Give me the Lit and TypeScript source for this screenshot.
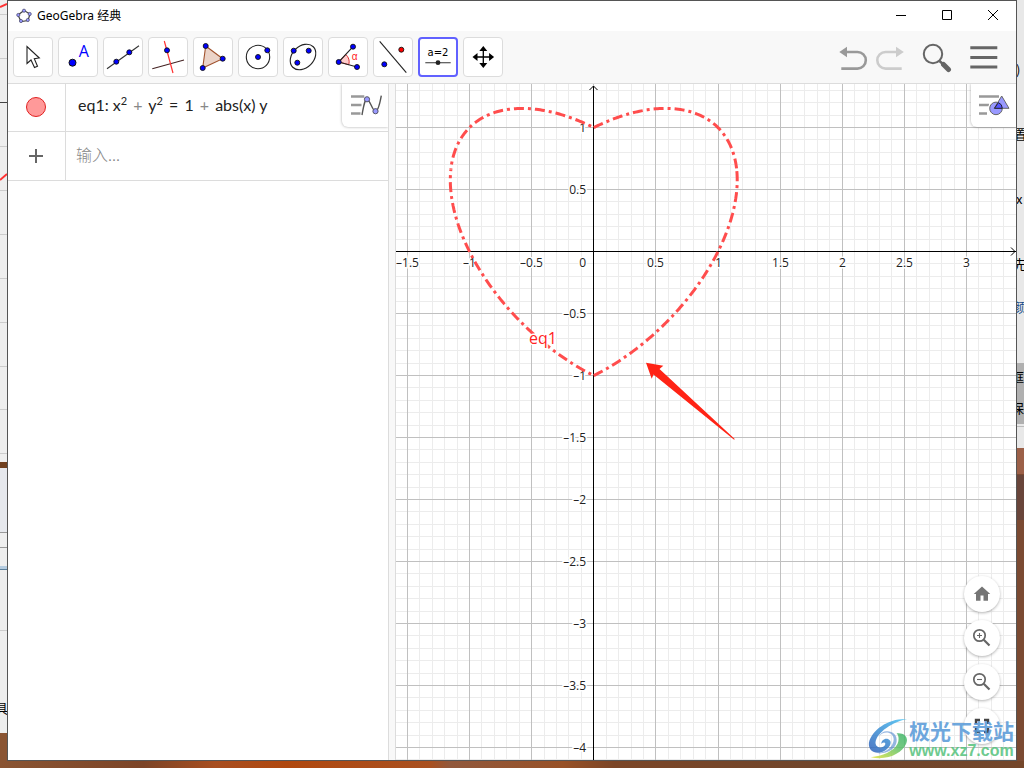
import { LitElement, html, svg, css, TemplateResult } from "lit";
import { customElement, state } from "lit/decorators.js";

/* ---------- tool icons ---------- */
const dot = (x: number, y: number, fill = "#00f") =>
  svg`<circle cx=${x} cy=${y} r="2.5" fill=${fill} stroke="#111" stroke-width="0.9"/>`;

interface Tool { name: string; icon: TemplateResult }

const tools: Tool[] = [
  { name: "Move", icon: svg`<path d="M14 9.5V26.5L18 23L21.5 30.5L24.5 29.2L21.3 21.8L26.3 21Z" fill="#fff" stroke="#222" stroke-width="1.1"/>` },
  { name: "Point", icon: svg`<circle cx="14.5" cy="25.7" r="3.5" fill="#00f" stroke="#111"/><text x="25.7" y="20" text-anchor="middle" font-size="16" fill="#00f">A</text>` },
  { name: "Line", icon: svg`<path d="M4 31.7L36 8.7" stroke="#333" stroke-width="1.1"/>${dot(13.3, 24.7)}${dot(26.3, 15.3)}` },
  { name: "Perpendicular Line", icon: svg`<path d="M4.3 31.7L36 23" stroke="#422" stroke-width="1.1"/><path d="M16.3 4L25 36" stroke="#f33" stroke-width="1.2"/>${dot(19, 13.3)}` },
  { name: "Polygon", icon: svg`<path d="M12.7 9L29.7 21.7L9.7 31Z" fill="#ebd3c8" stroke="#a0522d" stroke-width="1.1"/>${dot(12.7, 9)}${dot(29.7, 21.7)}${dot(9.7, 31)}` },
  { name: "Circle with Center", icon: svg`<circle cx="20" cy="20" r="11.7" fill="none" stroke="#222" stroke-width="1.1"/>${dot(20, 20)}${dot(29.3, 13.3)}` },
  { name: "Ellipse", icon: svg`<ellipse cx="20" cy="20" rx="14.5" ry="10.8" transform="rotate(-45 20 20)" fill="none" stroke="#222" stroke-width="1.1"/>${dot(10.7, 13.7)}${dot(25.7, 13.7)}${dot(14.3, 25.7)}` },
  { name: "Angle", icon: svg`<path d="M10.7 25L17.7 17.4A10.4 10.4 0 0 1 20.8 27.7Z" fill="#fcc" stroke="#d33" stroke-width="1"/><path d="M25 9.7L10.7 25L29 30" fill="none" stroke="#222" stroke-width="1.1"/>${dot(10.7, 25)}${dot(25, 9.7)}${dot(29, 30)}<text x="26.7" y="23" text-anchor="middle" font-family="Liberation Sans, sans-serif" font-size="10" fill="#f22">α</text>` },
  { name: "Reflect about Line", icon: svg`<path d="M6.7 4.3L33.3 35.7" stroke="#222" stroke-width="1.1"/>${dot(28.3, 12.7, "#f00")}${dot(11.3, 27.3)}` },
  { name: "Slider", icon: svg`<text x="20" y="18.6" text-anchor="middle" font-family="DejaVu Sans, sans-serif" font-size="10" fill="#000">a=2</text><path d="M7.3 25.7H32.7" stroke="#555" stroke-width="1.2"/><circle cx="20" cy="25.7" r="2.4" fill="#222"/>` },
  { name: "Move Graphics View", icon: svg`<path d="M20.3 12V28M12 20H28.6" stroke="#000" stroke-width="1.3"/><path d="M20.3 9L24.3 14H16.3ZM20.3 31L24.3 26H16.3ZM9.5 20L14.5 16V24ZM31.1 20L26.1 16V24Z" fill="#000"/>` },
];

/* ---------- graph geometry ---------- */
const ORIGIN_X = 197.76;
const ORIGIN_Y = 167.4;
const UNIT_X = 124.25;
const UNIT_Y = 124;
const snap = (v: number) => Math.floor(v) + 0.5;
const toX = (x: number) => snap(ORIGIN_X + UNIT_X * x);
const toY = (y: number) => snap(ORIGIN_Y - UNIT_Y * y);
const range = (from: number, to: number) => Array.from({ length: to - from + 1 }, (_, i) => from + i);
const label = (n: number) => String(n).replace("-", "–");

/* One arc of x² + y² = 1 + |x| y, sampled by angle; side mirrors it to the left half. */
function arc(fromDeg: number, toDeg: number, side: number): string {
  const steps = 90;
  return range(0, steps).map((i) => {
    const t = ((fromDeg + ((toDeg - fromDeg) * i) / steps) * Math.PI) / 180;
    const r = 1 / Math.sqrt(1 - Math.abs(Math.cos(t)) * Math.sin(t));
    const x = ORIGIN_X + UNIT_X * r * Math.cos(t) * side;
    const y = ORIGIN_Y + 0.2 - UNIT_Y * r * Math.sin(t);
    return `${i ? "L" : "M"}${x.toFixed(2)} ${y.toFixed(2)}`;
  }).join("");
}

@customElement("graph-view")
export class GraphView extends LitElement {
  static styles = css`
    :host { display: block; position: relative; min-width: 0; background: #fff; overflow: hidden; }
    .plot { display: block; width: 100%; height: 100%; font-family: "Open Sans", "Noto Sans", sans-serif; }
    .minor { stroke: #ececec; }
    .major { stroke: #c0c0c0; }
    .axis { stroke: #000; fill: none; }
    .tick { font-size: 12px; fill: #222; stroke: #fff; stroke-width: 3px; paint-order: stroke; }
    .curve { fill: none; stroke: #ff4d4d; stroke-width: 3px; stroke-dasharray: 10 4 3 4; }
    .shifted { stroke-dashoffset: 11px; }
    .name { font-size: 16px; fill: #f22; stroke: #fff; stroke-width: 3px; paint-order: stroke; }
    .style-button {
      position: absolute; top: 0; right: 0; width: 45px; height: 43px; padding: 0; border: 0;
      border-radius: 0 0 0 6px; background: #fff; box-shadow: 0 0 3px rgba(0, 0, 0, 0.35);
    }
    .style-button svg { display: block; }
    .zoom { position: absolute; right: 16px; bottom: 16px; display: flex; flex-direction: column; gap: 8px; }
    .zoom button {
      display: grid; place-items: center; width: 36px; height: 36px; padding: 0; border: 0;
      border-radius: 50%; background: #fff; box-shadow: 0 1px 3px rgba(0, 0, 0, 0.3);
    }
  `;

  @state() private viewWidth = 620;
  @state() private viewHeight = 676;

  private observer = new ResizeObserver(([entry]) => {
    this.viewWidth = entry.contentRect.width;
    this.viewHeight = entry.contentRect.height;
  });

  connectedCallback() {
    super.connectedCallback();
    this.observer.observe(this);
  }

  disconnectedCallback() {
    this.observer.disconnect();
    super.disconnectedCallback();
  }

  render() {
    const xs = range(-15, Math.floor(((this.viewWidth - ORIGIN_X) / UNIT_X) * 10));
    const ys = range(-Math.floor(((this.viewHeight - ORIGIN_Y) / UNIT_Y) * 10), 13);
    const major = (n: number) => n % 5 === 0;
    const v = (n: number) => svg`<line class=${major(n) ? "major" : "minor"} x1=${toX(n / 10)} x2=${toX(n / 10)} y1="0" y2="100%"/>`;
    const h = (n: number) => svg`<line class=${major(n) ? "major" : "minor"} y1=${toY(n / 10)} y2=${toY(n / 10)} x1="0" x2="100%"/>`;
    return html`
      <svg class="plot" role="img" aria-label="Graphics View">
        ${xs.filter((n) => !major(n)).map(v)}${ys.filter((n) => !major(n)).map(h)}
        ${xs.filter(major).map(v)}${ys.filter(major).map(h)}
        <line class="axis" x1=${toX(0)} x2=${toX(0)} y1="2" y2="100%"></line>
        <line class="axis" x1="0" x2="100%" y1=${toY(0)} y2=${toY(0)}></line>
        <path class="axis" d="M193.5 6L197.5 2L201.5 6"></path>
        <svg x="100%" y=${toY(0)} overflow="visible"><path class="axis" d="M-5 -4L-1 0L-5 4"></path></svg>
        ${xs.filter((n) => major(n) && n !== 0).map((n) => svg`<text class="tick" text-anchor="middle" x=${toX(n / 10)} y=${toY(0) + 15.5}>${label(n / 10)}</text>`)}
        <text class="tick" text-anchor="end" x="190" y=${toY(0) + 15.5}>0</text>
        ${ys.filter((n) => major(n) && n !== 0).map((n) => svg`<text class="tick" text-anchor="end" x="190" y=${toY(n / 10) + 4.5}>${label(n / 10)}</text>`)}
        <path class="curve" d=${arc(90, 30, 1)}></path>
        <path class="curve" d=${arc(-90, 30, 1)}></path>
        <path class="curve shifted" d=${arc(90, 30, -1)}></path>
        <path class="curve shifted" d=${arc(-90, 30, -1)}></path>
        <text class="name" x="133" y="260">eq1</text>
        <path fill="#ff2315" d="M250 278.7L267.3 281.7L263.5 285L339 355.3L337.8 355.6L257.5 290.5L255.7 294.7Z"></path>
      </svg>
      <button class="style-button" aria-label="Graphics style">
        <svg width="45" height="43" viewBox="971 84 45 43">
          <path d="M979 96.5H999M979 105H989M979 113.5H987" stroke="#999" stroke-width="2.4"/>
          <circle cx="996" cy="108.4" r="8" fill="#fff"/>
          <circle cx="996" cy="108.4" r="6.3" fill="#99f" stroke="#666"/>
          <path d="M1001.7 96L1009 108.3H994.3Z" fill="#99f" stroke="#666"/>
          <path d="M994.5 108.3L998.4 102.6A6.3 6.3 0 0 1 1002.3 108.3Z" fill="#55f" stroke="#223"/>
        </svg>
      </button>
      <div class="zoom">
        <button aria-label="Standard View"><svg width="18" height="18" viewBox="0 0 24 24"><path fill="#757575" d="M10 21V14h4v7h6v-9h3L12 2 1 12h3v9z"/></svg></button>
        <button aria-label="Zoom In"><svg width="24" height="24" viewBox="0 0 24 24"><g fill="none" stroke="#666"><circle cx="9.5" cy="9.5" r="5.7" stroke-width="1.7"/><path d="M13.7 13.7L19.5 19.5" stroke-width="2.2"/><path d="M9.5 7V12M7 9.5H12" stroke-width="1.1"/></g></svg></button>
        <button aria-label="Zoom Out"><svg width="24" height="24" viewBox="0 0 24 24"><g fill="none" stroke="#666"><circle cx="9.5" cy="9.5" r="5.7" stroke-width="1.7"/><path d="M13.7 13.7L19.5 19.5" stroke-width="2.2"/><path d="M7 9.5H12" stroke-width="1.1"/></g></svg></button>
        <button aria-label="Fullscreen"><svg width="24" height="24" viewBox="0 0 24 24"><path fill="none" stroke="#444" stroke-width="2.4" d="M6 10V6h4M14 6h4v4M18 14v4h-4M10 18H6v-4"/></svg></button>
      </div>
    `;
  }
}

@customElement("algebra-view")
export class AlgebraView extends LitElement {
  static styles = css`
    :host {
      display: block; position: relative; min-width: 0; background: #fff;
      font-family: Lato, "Noto Sans CJK SC", sans-serif; border-right: 1px solid #dcdcdc;
    }
    .row { display: grid; grid-template-columns: 58px minmax(0, 1fr); height: 48px; box-sizing: border-box; border-bottom: 1px solid #dcdcdc; }
    .entry { height: 49px; }
    .marker { display: grid; place-items: center; border: 0; border-right: 1px solid #dcdcdc; padding: 0 1px 1px 0; background: none; }
    .marble { box-sizing: border-box; width: 20px; height: 20px; border: 1px solid #e02020; border-radius: 50%; background: #ff9999; }
    .equation { padding: 11px 0 0 12px; font-size: 16px; line-height: 20px; color: #222; white-space: pre; }
    .equation sup { font-size: 11px; line-height: 0; vertical-align: 6px; }
    .operator { margin: 0 2px; }
    .plus { color: #888; }
    .input { border: 0; outline: 0; background: none; padding: 0 10px 4px; font: 300 16px "Noto Sans CJK SC", sans-serif; min-width: 0; }
    .input::placeholder { color: #888; opacity: 1; }
    .style-button {
      position: absolute; top: 0; right: 0; width: 46px; height: 43px; padding: 0; border: 0;
      border-radius: 0 0 0 6px; background: #fff; clip-path: inset(0 0 -4px -4px); box-shadow: 0 0 3px rgba(0, 0, 0, 0.35);
    }
    .style-button svg { display: block; }
  `;

  render() {
    const plus = html`<span class="operator plus">+</span>`;
    return html`
      <div class="row">
        <button class="marker" aria-label="Show or hide eq1"><span class="marble"></span></button>
        <div class="equation">eq1: x<sup>2</sup> ${plus} y<sup>2</sup> <span class="operator">=</span> 1 ${plus} abs(x) y</div>
      </div>
      <div class="row entry">
        <button class="marker" aria-label="Add"><svg width="14" height="14" viewBox="0 0 14 14"><path d="M7 0V14M0 7H14" stroke="#666" stroke-width="2"/></svg></button>
        <input class="input" aria-label="输入" placeholder="输入..." />
      </div>
      <button class="style-button" aria-label="Algebra style">
        <svg width="46" height="43" viewBox="342 84 46 43">
          <path d="M351 96.5H364.3M351 105H361.5M351 113.5H360.5" stroke="#999" stroke-width="2.4"/>
          <path d="M362 115C363.5 107 364.5 99.5 367 99.3C370 99.5 372.5 111.5 375.5 111.3C378.5 111 380 103 381.3 95.7" fill="none" stroke="#555" stroke-width="1.4"/>
          <g fill="#99f" stroke="#556"><circle cx="367" cy="99.3" r="2.6"/><circle cx="375.5" cy="111.2" r="2.6"/></g>
        </svg>
      </button>
    `;
  }
}

@customElement("app-root")
export class AppRoot extends LitElement {
  static styles = css`
    :host { display: block; height: 100vh; font-family: "Noto Sans", "Noto Sans CJK SC", sans-serif; }
    button { font: inherit; }
    .desktop {
      display: grid; grid-template: minmax(0, 1fr) 7px / 7px minmax(0, 1fr) 7px; height: 100%; overflow: hidden;
      background: #79482b;
    }
    .strip { display: flex; flex-direction: column; overflow: hidden; min-height: 0; }
    .strip svg { display: block; flex: none; }
    .floor {
      grid-column: 1 / -1;
      background: linear-gradient(90deg, #8a5432 0, #7c4427 14%, #a84e20 21%, #b0480f 28%, #a95020 42%, #91583c 44%, #985127 55%, #7b4527 60%, #70452b 80%, #74462a 100%);
    }
    .window {
      display: grid; grid-template-rows: 30px 53px minmax(0, 1fr); min-width: 0; min-height: 0; position: relative;
      border: 1px solid #555; background: #fff;
    }
    .title-bar { display: flex; align-items: center; padding-left: 8px; font-size: 12px; color: #000; }
    .title { flex: 1; margin-left: 5px; padding-bottom: 2px; }
    .caption { display: grid; place-items: center; width: 46px; height: 28px; border: 0; padding: 0; background: none; align-self: flex-start; }
    .tool-bar { display: flex; align-items: center; box-sizing: border-box; padding: 0 16px 0 5px; background: #f8f8f8; border-bottom: 1px solid #dcdcdc; }
    .tools { display: flex; gap: 5px; flex: 1; }
    .tool {
      display: grid; place-items: center; box-sizing: border-box; width: 40px; height: 40px; padding: 0;
      border: 1px solid #dcdcdc; border-radius: 4px; background: #fff;
    }
    .tool svg { width: 36px; height: 36px; font-family: "Open Sans", sans-serif; }
    .selected { border: 2px solid #6161ff; }
    .actions { display: flex; gap: 15px; }
    .history { display: flex; gap: 5px; }
    .action { border: 0; padding: 0; background: none; width: 32px; height: 32px; }
    .action svg { display: block; }
    .views { display: grid; grid-template-columns: minmax(0, 388fr) minmax(0, 620fr); min-height: 0; }
    .left { display: grid; grid-template-columns: minmax(0, 1fr) 7px; background: #f8f8f8; }
    .splitter { box-sizing: border-box; border-right: 1px solid #dcdcdc; }
    .watermark { position: absolute; right: 2px; bottom: 0; display: flex; align-items: flex-end; opacity: 0.85; pointer-events: none; }
    .brand { display: flex; flex-direction: column; align-items: center; }
    .brand-name { font: 700 21px/24px "Noto Sans CJK SC", sans-serif; color: #5598d8; }
    .brand-url { font: 700 16px/18px "Liberation Sans", sans-serif; color: #55c27c; }
  `;

  @state() private tool = "Slider";

  private leftStrip() {
    return html`<svg width="7" height="761" viewBox="0 0 7 761" font-family="Noto Sans CJK SC, sans-serif">
      <rect width="7" height="761" fill="#eee"/>
      <path d="M0 14.5H7M0 58.5H7M0 146.5H7M0 190.5H7M0 234.5H7M0 278.5H7M0 322.5H7M0 366.5H7M0 409.5H7M0 453.5H7" stroke="#ccc"/>
      <path d="M0 102.5H7" stroke="#444"/>
      <path d="M0 7L7 4M0 180L7 174" stroke="#f33" stroke-width="2"/>
      <rect y="462" width="7" height="6" fill="#70401f"/>
      <rect y="468" width="7" height="64" fill="#e6e8ed"/>
      <path d="M0 532.5H7M0 547.5H7" stroke="#999"/>
      <rect y="566" width="7" height="3" fill="#b5cce0"/>
      <path d="M0 569.5H7" stroke="#5b7f9a"/>
      <path d="M0 630.5H7" stroke="#ccc"/>
      <text x="-5" y="713" font-size="13">具</text>
      <rect y="733" width="7" height="28" fill="#8a5432"/>
    </svg>`;
  }

  private rightStrip() {
    return html`<svg width="7" height="761" viewBox="0 0 7 761" font-family="Noto Sans CJK SC, sans-serif" font-size="13">
      <rect width="7" height="761" fill="#e8e8e8"/>
      <text x="-1" y="75">)</text>
      <text x="-3" y="139">置</text>
      <text x="-1" y="204">x</text>
      <text x="-4" y="269">先</text>
      <text x="-4" y="312" fill="#124a8a">颜</text>
      <rect y="363" width="7" height="61" fill="#b0b0b0"/>
      <text x="-6" y="382">框</text>
      <text x="-6" y="413">保</text>
      <path d="M0 426.5H7" stroke="#bbb"/>
      <rect y="448" width="7" height="313" fill="#7b4a32"/>
      <rect y="448" width="7" height="26" fill="#9c6048"/>
      <rect y="475" width="7" height="45" fill="#69453a"/>
    </svg>`;
  }

  render() {
    return html`
      <div class="desktop">
        <div class="strip" aria-hidden="true">${this.leftStrip()}</div>
        <main class="window">
          <header class="title-bar">
            <svg width="16" height="16" viewBox="0 0 16 16">
              <path d="M8 2.5L14 6L12 12.5L5 13.5L2 7Z" fill="none" stroke="#444" stroke-width="1.2"/>
              <g fill="#99f" stroke="#446" stroke-width="0.7"><circle cx="8" cy="2.7" r="1.6"/><circle cx="13.7" cy="6" r="1.6"/><circle cx="11.8" cy="12" r="1.6"/><circle cx="5" cy="13" r="1.6"/><circle cx="2.3" cy="7" r="1.6"/></g>
            </svg>
            <span class="title">GeoGebra 经典</span>
            <button class="caption" aria-label="Minimize"><svg width="12" height="12"><path d="M1 6.5H11" stroke="#000"/></svg></button>
            <button class="caption" aria-label="Maximize"><svg width="12" height="12"><path d="M1.5 1.5H10.5V10.5H1.5Z" fill="none" stroke="#000"/></svg></button>
            <button class="caption" aria-label="Close"><svg width="12" height="12"><path d="M1 1L11 11M11 1L1 11" stroke="#000"/></svg></button>
          </header>
          <nav class="tool-bar">
            <div class="tools">
              ${tools.map((t) => html`<button class="tool ${t.name === this.tool ? "selected" : ""}" aria-label=${t.name}
                @click=${() => (this.tool = t.name)}><svg viewBox="2 2 36 36">${t.icon}</svg></button>`)}
            </div>
            <div class="actions">
              <div class="history">
                <button class="action" aria-label="Undo"><svg width="32" height="32"><path d="M8 11H20.5A8.3 8.3 0 0 1 20.5 27.6H4.3" fill="none" stroke="#999" stroke-width="2.6"/><path d="M2.3 11L10 5.7V16.3Z" fill="#999"/></svg></button>
                <button class="action" aria-label="Redo"><svg width="32" height="32"><path d="M24 11H11.6A8.3 8.3 0 0 0 11.6 27.6H27.7" fill="none" stroke="#ccc" stroke-width="2.6"/><path d="M29.8 11L22 5.7V16.3Z" fill="#ccc"/></svg></button>
              </div>
              <button class="action" aria-label="Search"><svg width="32" height="32"><circle cx="12" cy="13" r="9.2" fill="none" stroke="#666" stroke-width="2"/><path d="M18.5 20L23 24" stroke="#666" stroke-width="2.4"/><path d="M22.5 23.5L27.5 28.5" stroke="#666" stroke-width="5" stroke-linecap="round"/></svg></button>
              <button class="action" aria-label="Menu"><svg width="32" height="32"><path d="M2.3 6.7H29.3M2.3 16.4H29.3M2.3 26H29.3" stroke="#666" stroke-width="3"/></svg></button>
            </div>
          </nav>
          <section class="views">
            <div class="left">
              <algebra-view></algebra-view>
              <div class="splitter"></div>
            </div>
            <graph-view></graph-view>
          </section>
          <div class="watermark">
            <svg width="42" height="42" viewBox="0 0 42 44">
              <defs>
                <linearGradient id="sky" x1="0" y1="1" x2="1" y2="0"><stop offset="0" stop-color="#2f5fb8"/><stop offset="1" stop-color="#48c4f5"/></linearGradient>
                <linearGradient id="leaf" x1="0" y1="1" x2="1" y2="0"><stop offset="0" stop-color="#e6e63c"/><stop offset="0.6" stop-color="#5cc06a"/><stop offset="1" stop-color="#3fb56a"/></linearGradient>
              </defs>
              <path d="M41 1C22 0 4 12 1 26C0 36 10 39 18 34C24 30 26 24 21 22C17 21 14 24 14 27C16 25 19 25 18 28C16 32 9 32 8 27C7 18 22 5 41 1Z" fill="url(#sky)"/>
              <path d="M11 20C16 13 26 14 27 22C27 30 19 36 10 37C19 38 29 33 30 25C31 18 26 14 20 14C16 14 13 16 11 20Z" fill="#4c84cc" opacity="0.7"/>
              <path d="M30 16C38 15 43 20 40 27C36 37 20 45 3 41C15 40 27 35 31 27C33 22 32 18 30 16Z" fill="url(#leaf)"/>
            </svg>
            <div class="brand">
              <span class="brand-name">极光下载站</span>
              <span class="brand-url">www.xz7.com</span>
            </div>
          </div>
        </main>
        <div class="strip" aria-hidden="true">${this.rightStrip()}</div>
        <div class="floor"></div>
      </div>
    `;
  }
}
